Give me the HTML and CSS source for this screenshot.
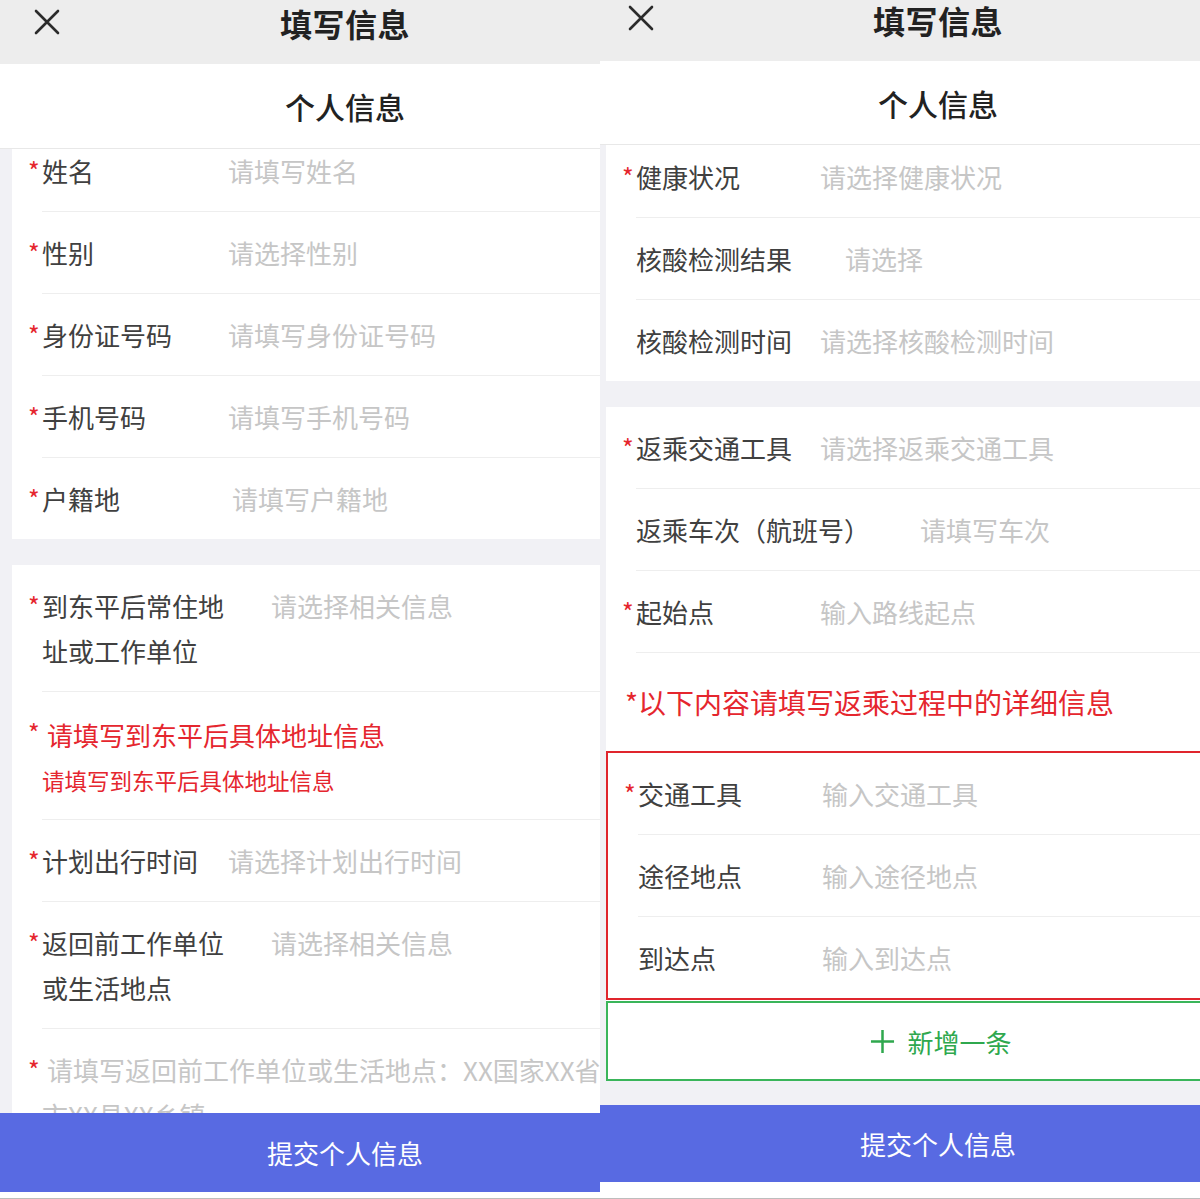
FILE: index.html
```html
<!DOCTYPE html>
<html lang="zh-CN">
<head>
<meta charset="utf-8">
<title>填写信息</title>
<link rel="stylesheet" href="styles.css">
</head>
<body>
<div class="pair">
  <!-- LEFT PHONE -->
  <section class="phone phone-a">
    <div class="screen">
      <header class="topbar">
        <span class="close"><svg viewBox="0 0 26 26" width="26" height="26"><path d="M2 2 L24 24 M24 2 L2 24" stroke="#2b2b2b" stroke-width="2.6" fill="none" stroke-linecap="round"/></svg></span>
        <h1 class="title">填写信息</h1>
        <span></span>
      </header>
      <div class="section-title">个人信息</div>
      <div class="scroll">
        <div class="scroll-inner">
          <div class="card">
            <div class="row"><span class="req">*</span><div class="field"><span class="label">姓名</span><span class="ph">请填写姓名</span></div></div>
            <div class="row"><span class="req">*</span><div class="field"><span class="label">性别</span><span class="ph">请选择性别</span></div></div>
            <div class="row"><span class="req">*</span><div class="field"><span class="label">身份证号码</span><span class="ph">请填写身份证号码</span></div></div>
            <div class="row"><span class="req">*</span><div class="field"><span class="label">手机号码</span><span class="ph">请填写手机号码</span></div></div>
            <div class="row last"><span class="req">*</span><div class="field"><span class="label w190">户籍地</span><span class="ph">请填写户籍地</span></div></div>
          </div>
          <div class="card">
            <div class="row"><span class="req">*</span><div class="field"><span class="label wrap">到东平后常住地址或工作单位</span><span class="ph">请选择相关信息</span></div></div>
            <div class="row"><span class="req">*</span><div class="field note"><div class="note-main">请填写到东平后具体地址信息</div><div class="note-sub">请填写到东平后具体地址信息</div></div></div>
            <div class="row"><span class="req">*</span><div class="field"><span class="label">计划出行时间</span><span class="ph">请选择计划出行时间</span></div></div>
            <div class="row"><span class="req">*</span><div class="field"><span class="label wrap">返回前工作单位或生活地点</span><span class="ph">请选择相关信息</span></div></div>
            <div class="row last"><span class="req">*</span><div class="field hint">请填写返回前工作单位或生活地点：XX国家XX省<br>市XX县XX乡镇</div></div>
          </div>
        </div>
      </div>
      <button class="submit">提交个人信息</button>
      <div class="footer"></div>
    </div>
  </section>

  <!-- RIGHT PHONE -->
  <section class="phone phone-b">
    <div class="screen">
      <header class="topbar">
        <span class="close"><svg viewBox="0 0 26 26" width="26" height="26"><path d="M2 2 L24 24 M24 2 L2 24" stroke="#2b2b2b" stroke-width="2.6" fill="none" stroke-linecap="round"/></svg></span>
        <h1 class="title">填写信息</h1>
        <span></span>
      </header>
      <div class="section-title">个人信息</div>
      <div class="scroll">
        <div class="scroll-inner">
          <div class="card">
            <div class="row"><span class="req">*</span><div class="field"><span class="label">健康状况</span><span class="ph">请选择健康状况</span></div></div>
            <div class="row"><span class="req"></span><div class="field"><span class="label w209">核酸检测结果</span><span class="ph">请选择</span></div></div>
            <div class="row last"><span class="req"></span><div class="field"><span class="label">核酸检测时间</span><span class="ph">请选择核酸检测时间</span></div></div>
          </div>
          <div class="card">
            <div class="row"><span class="req">*</span><div class="field"><span class="label">返乘交通工具</span><span class="ph">请选择返乘交通工具</span></div></div>
            <div class="row"><span class="req"></span><div class="field"><span class="label w284">返乘车次（航班号）</span><span class="ph">请填写车次</span></div></div>
            <div class="row"><span class="req">*</span><div class="field"><span class="label">起始点</span><span class="ph">输入路线起点</span></div></div>
            <div class="route-note">*以下内容请填写返乘过程中的详细信息</div>
            <div class="route-box">
              <div class="row"><span class="req">*</span><div class="field"><span class="label">交通工具</span><span class="ph">输入交通工具</span></div></div>
              <div class="row"><span class="req"></span><div class="field"><span class="label">途径地点</span><span class="ph">输入途径地点</span></div></div>
              <div class="row last"><span class="req"></span><div class="field"><span class="label">到达点</span><span class="ph">输入到达点</span></div></div>
            </div>
            <div class="add-box">
              <svg viewBox="0 0 26 26" width="25" height="25"><path d="M13 1 V25 M1 13 H25" stroke="#2fa84e" stroke-width="2.6" fill="none"/></svg>
              <span>新增一条</span>
            </div>
          </div>
        </div>
      </div>
      <button class="submit">提交个人信息</button>
      <div class="footer"></div>
    </div>
  </section>
</div>
</body>
</html>
```

FILE: styles.css
```css
* { box-sizing: border-box; }

html, body {
  margin: 0;
  padding: 0;
  background: #ffffff;
}

body {
  font-family: "Noto Sans CJK SC", "Noto Sans", sans-serif;
  color: #3f3f3f;
}

.pair {
  display: flex;
  width: 1200px;
  height: 1199px;
  overflow: hidden;
}

.phone {
  width: 600px;
  height: 1199px;
  overflow: hidden;
  flex: none;
}

.screen {
  height: 100%;
  display: flex;
  flex-direction: column;
}

.phone-a .screen { width: 690px; }
.phone-b .screen { width: 676px; }

/* top bar */
.topbar {
  flex: none;
  background: #ededed;
  display: grid;
  grid-template-columns: 1fr auto 1fr;
  align-items: start;
}

.phone-a .topbar { height: 64px; }
.phone-b .topbar { height: 61px; }

.close {
  display: block;
  width: 26px;
  height: 26px;
}
.close svg { display: block; }
.phone-a .close { margin: 9px 0 0 34px; }
.phone-b .close { margin: 5px 0 0 28px; }

.title {
  margin: 0;
  font-size: 32px;
  font-weight: 700;
  color: #222222;
  letter-spacing: 0.5px;
}
.phone-a .title { padding-top: 3px; line-height: 40px; }
.phone-b .title { padding-top: 3px; line-height: 34px; }

.section-title {
  flex: none;
  background: #ffffff;
  border-bottom: 1px solid #e8e8e8;
  display: flex;
  align-items: center;
  justify-content: center;
  font-size: 30px;
  font-weight: 500;
  color: #222222;
}
.phone-a .section-title { height: 85px; }
.phone-b .section-title { height: 84px; }

/* scroll area */
.scroll {
  flex: 1;
  min-height: 0;
  overflow: hidden;
  background: #f1f1f5;
}

.phone-a .scroll-inner { margin-top: -19px; padding-left: 12px; }
.phone-b .scroll-inner { margin-top: -9px; padding-left: 6px; }

.card {
  background: #ffffff;
  margin-bottom: 26px;
}

.row {
  display: flex;
  padding-left: 16px;
}

.req {
  flex: none;
  width: 14px;
  color: #e5262e;
  font-size: 25px;
  line-height: 45px;
  padding-top: 18px;
}

.field {
  flex: 1;
  display: flex;
  align-items: flex-start;
  padding: 18px 0;
  line-height: 45px;
  font-size: 26px;
  border-bottom: 1px solid #eeeeee;
}

.row.last .field { border-bottom: none; }

.label {
  flex: none;
  width: 186px;
  color: #404040;
}
.phone-b .label { width: 184px; }
.label.w190 { width: 190px; }
.phone-b .label.w209 { width: 209px; }
.phone-b .label.w284 { width: 284px; }
.label.wrap { width: 229px; padding-right: 40px; }

.ph {
  color: #c6c6c6;
}

/* red note (left) */
.field.note {
  display: block;
  color: #e5262e;
  padding: 20px 0 16px;
}
.note-main {
  padding-left: 5px;
  font-size: 26px;
  line-height: 45px;
}
.note-sub {
  font-size: 22.5px;
  line-height: 46px;
}

.field.hint {
  display: block;
  color: #c6c6c6;
  text-indent: 5px;
}

/* right phone route section */
.route-note {
  height: 98px;
  display: flex;
  align-items: center;
  padding-left: 19px;
  font-size: 28px;
  color: #e5262e;
}

.route-box {
  border: 2px solid #e0252d;
}

.add-box {
  margin-top: 1px;
  height: 80px;
  border: 2px solid #3ab55a;
  display: flex;
  align-items: center;
  justify-content: center;
  gap: 12px;
  color: #2fa84e;
  font-size: 26px;
}
.add-box svg { display: block; }

.phone-b .card:last-child { margin-bottom: 0; }

/* submit */
.submit {
  flex: none;
  display: block;
  width: 100%;
  border: none;
  margin: 0;
  padding: 0;
  background: #586ae2;
  color: #ffffff;
  font-family: inherit;
  font-size: 26px;
  text-align: center;
}
.phone-a .submit { height: 79px; }
.phone-b .submit { height: 77px; }

.footer {
  flex: none;
  background: #ffffff;
  border-bottom: 1px solid #bdbdbd;
}
.phone-a .footer { height: 7px; }
.phone-b .footer { height: 17px; }
```
